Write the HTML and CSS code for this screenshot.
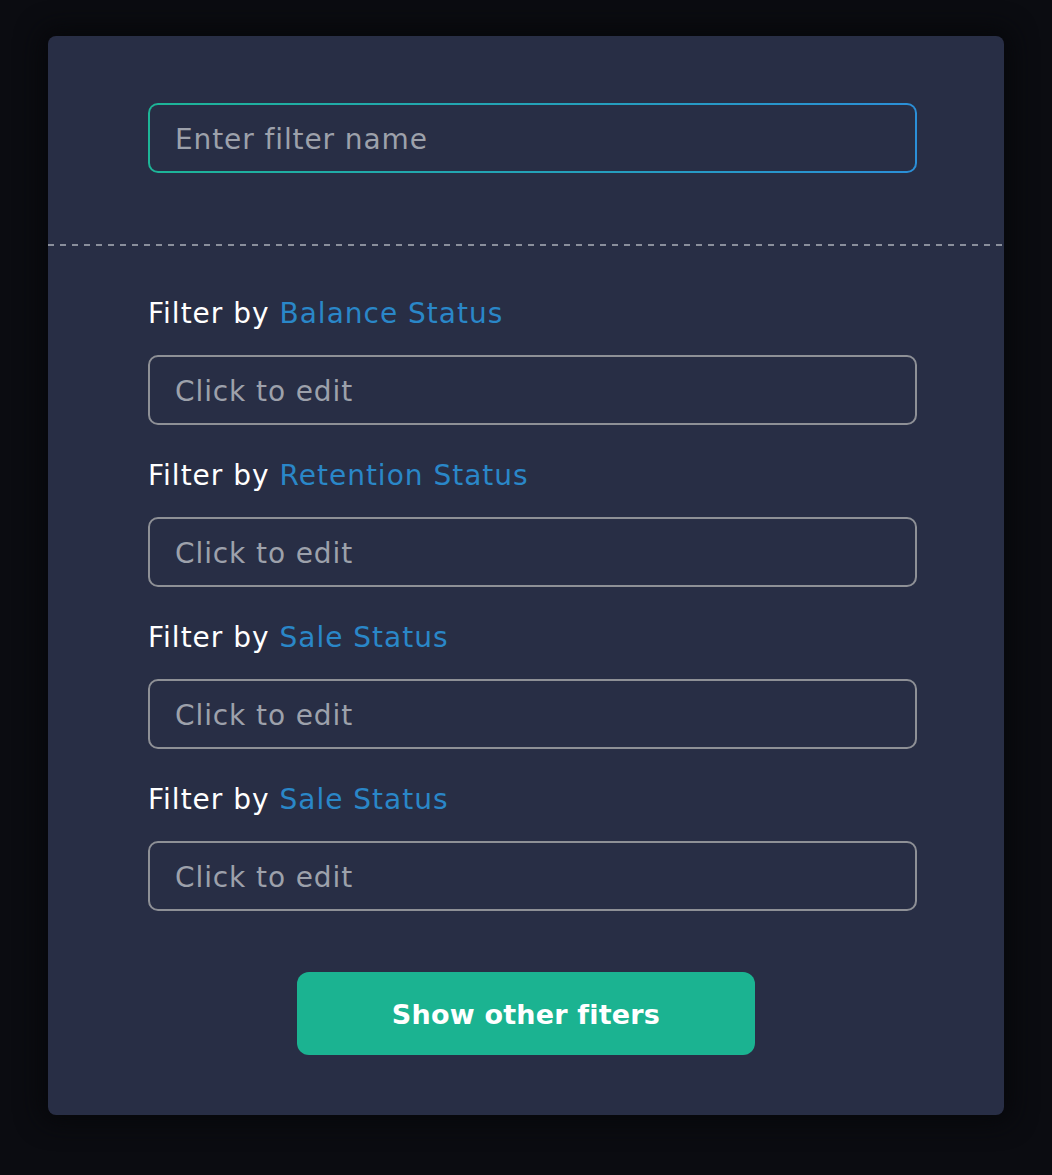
FILE: index.html
```html
<!DOCTYPE html>
<html lang="en">
<head>
<meta charset="utf-8">
<title>Filters</title>
<link rel="stylesheet" href="styles.css">
</head>
<body>
<div class="card">
  <div class="top">
    <div class="field field-active"><span class="placeholder">Enter filter name</span></div>
  </div>
  <div class="separator"></div>
  <div class="filters">
    <div class="group">
      <div class="label">Filter by <span class="accent">Balance Status</span></div>
      <div class="field"><span class="placeholder">Click to edit</span></div>
    </div>
    <div class="group">
      <div class="label">Filter by <span class="accent">Retention Status</span></div>
      <div class="field"><span class="placeholder">Click to edit</span></div>
    </div>
    <div class="group">
      <div class="label">Filter by <span class="accent">Sale Status</span></div>
      <div class="field"><span class="placeholder">Click to edit</span></div>
    </div>
    <div class="group">
      <div class="label">Filter by <span class="accent">Sale Status</span></div>
      <div class="field"><span class="placeholder">Click to edit</span></div>
    </div>
  </div>
  <div class="actions">
    <button class="btn">Show other fiters</button>
  </div>
</div>
</body>
</html>
```
FILE: styles.css
```css
html, body {
  margin: 0;
  padding: 0;
}
body {
  background: #0b0c11;
  width: 1052px;
  height: 1175px;
  overflow: hidden;
  font-family: "DejaVu Sans", "Noto Sans", sans-serif;
}
.card {
  margin: 36px 0 0 48px;
  width: 956px;
  height: 1079px;
  box-sizing: border-box;
  background: #282e45;
  border-radius: 8px;
  box-shadow: 0 0 24px 8px #07080b;
  display: flex;
  flex-direction: column;
}
.top {
  padding: 67px 87px 0 100px;
}
.field {
  height: 70px;
  box-sizing: border-box;
  border: 2px solid #8e9096;
  border-radius: 10px;
  display: flex;
  align-items: center;
  padding-left: 25px;
  padding-top: 2px;
}
.field-active {
  border: 2px solid transparent;
  background: linear-gradient(#282e45, #282e45) padding-box,
              linear-gradient(90deg, #1db597, #2b8fd8) border-box;
}
.placeholder {
  color: #9da1ab;
  font-size: 28px;
  letter-spacing: 0.9px;
  font-weight: 400;
}
.separator {
  margin-top: 71px;
  height: 2px;
  background: repeating-linear-gradient(90deg, #8a8f9c 0 6px, transparent 6px 12px);
}
.filters {
  padding: 50px 87px 0 100px;
  display: flex;
  flex-direction: column;
  gap: 33px;
}
.group {
  display: flex;
  flex-direction: column;
  gap: 25px;
}
.label {
  color: #ffffff;
  font-size: 28px;
  letter-spacing: 1px;
  line-height: 36px;
  height: 34px;
  white-space: nowrap;
}
.accent {
  color: #2a87c8;
}
.actions {
  display: flex;
  justify-content: center;
  padding-top: 61px;
}
.btn {
  width: 458px;
  height: 83px;
  padding-top: 2px;
  border: none;
  border-radius: 12px;
  background: #1bb391;
  color: #ffffff;
  font-family: inherit;
  font-size: 27px;
  letter-spacing: 0.2px;
  font-weight: 700;
  cursor: pointer;
}
```
